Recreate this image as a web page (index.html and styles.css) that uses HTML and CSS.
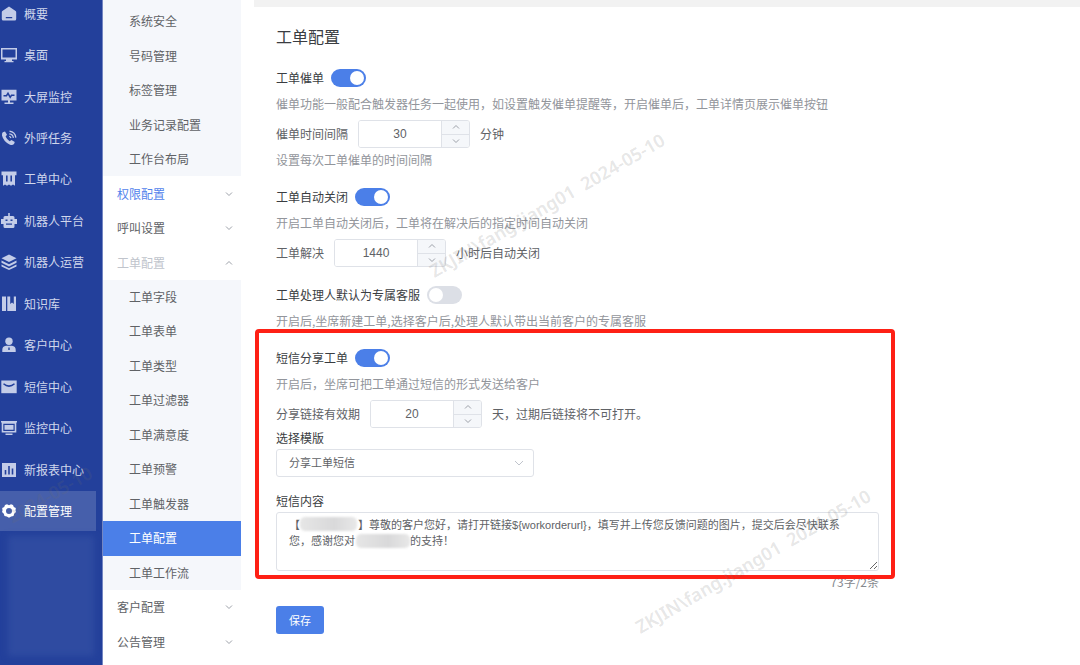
FILE: index.html
```html
<!DOCTYPE html>
<html lang="zh-CN">
<head>
<meta charset="utf-8">
<title>工单配置</title>
<link rel="stylesheet" href="styles.css">
</head>
<body>
<div class="app">
  <nav class="sidebar" aria-label="主导航">
    <a class="nav-item" href="#"><svg class="icon" viewBox="0 0 16 16"><path fill-rule="evenodd" d="M8 .5 14.600 5q.6.4.6 1.200V13q0 1.500-1.500 1.500H2.300Q.8 14.500.8 13V6.200Q.8 5.400 1.400 5ZM4.800 11v1.300h6.400V11Z"/></svg>概要</a>
    <a class="nav-item" href="#"><svg class="icon" viewBox="0 0 16 16"><path fill-rule="evenodd" d="M0 1h16v11.500h-5V14h1.500v1.300h-9V14H5v-1.500H0ZM1.500 2.500v8h13v-8Z"/></svg>桌面</a>
    <a class="nav-item" href="#"><svg class="icon" viewBox="0 0 16 16"><path d="M.5.800h15v10.700H9v2h3.500V15h-9v-1.500H7v-2H.500Z"/><path class="cut" d="M2.500 6.700h3L7 4.300l2.200 4 1.300-2h3"/></svg>大屏监控</a>
    <a class="nav-item" href="#"><svg class="icon" viewBox="0 0 16 16"><path d="M1.800 2.200 4 1.500l2 3.300-1.400 1.800q1.300 3 4 4.600l1.900-1.300 3.300 2.200-.8 2q-1.500 1.500-4 .6Q2.500 11.800 1 5.500.8 3.300 1.800 2.200Z"/><path class="line" d="M8.200 6.300q1.400.2 1.700 1.700M8.300 3.800q3.600.4 4.100 4M8.500 1.200q5.700.8 6.300 6.400"/></svg>外呼任务</a>
    <a class="nav-item" href="#"><svg class="icon" viewBox="0 0 16 16"><path fill-rule="evenodd" d="M.5.500h15v3.700H14v10.500l-2-1.300-2 1.300-2-1.300-2 1.300-2-1.300-2 1.300V4.200H.500ZM5 4.500v6h1.600v-6Zm4.400 0v6H11v-6Z"/></svg>工单中心</a>
    <a class="nav-item" href="#"><svg class="icon" viewBox="0 0 16 16"><path fill-rule="evenodd" d="M7.200 0h1.600v3H12q1.500 0 1.500 1.500V6H16v5h-2.500v2.500q0 1.500-1.500 1.500H4q-1.500 0-1.500-1.500V11H0V6h2.500V4.500Q2.500 3 4 3h3.200ZM4.500 6.500V8h2V6.500Zm5 0V8h2V6.500ZM5 10.500v1.300h6v-1.300Z"/></svg>机器人平台</a>
    <a class="nav-item" href="#"><svg class="icon" viewBox="0 0 16 16"><path d="m8 .5 7.500 3.700L8 8 .5 4.200Z"/><path d="m.5 6.500 7.500 3.700 7.500-3.700v2.300L8 12.500.5 8.800ZM.500 10.600 8 14.300l7.500-3.700v1.900L8 16 .5 12.500Z"/></svg>机器人运营</a>
    <a class="nav-item" href="#"><svg class="icon" viewBox="0 0 16 16"><path d="M1 .5h4v14.500H1ZM6.300.5h2.900V8l1.800-1.500L12.800 8V.500H15V15H6.300Z"/></svg>知识库</a>
    <a class="nav-item" href="#"><svg class="icon" viewBox="0 0 16 16"><circle cx="8" cy="4.200" r="3.700"/><path fill-rule="evenodd" d="M5 8.800h6q3.700.7 3.700 4V15H1.300v-2.200q0-3.300 3.700-4ZM7.300 10.500v2.500h1.400v-2.500Z"/></svg>客户中心</a>
    <a class="nav-item" href="#"><svg class="icon" viewBox="0 0 16 16"><path d="M.3 1.500h15.400v12.700H.3Z"/><path class="cut" d="M2.500 4.800Q8 9.500 13.500 4.800"/></svg>短信中心</a>
    <a class="nav-item" href="#"><svg class="icon" viewBox="0 0 16 16"><path fill-rule="evenodd" d="M0 1h16v1.500h-.7v10H.7v-10H0ZM2.300 3.800v7.200h11.400V3.800ZM3.500 5h9v4.800h-9ZM4.500 13.500h7V15h-7Z"/></svg>监控中心</a>
    <a class="nav-item" href="#"><svg class="icon" viewBox="0 0 16 16"><path fill-rule="evenodd" d="M1 1h14v14H1ZM3.700 8v4.500h1.600V8ZM7.200 4v8.500h1.600V4Zm3.500 2.500v6h1.600v-6Z"/></svg>新报表中心</a>
    <a class="nav-item nav-item-active" href="#" aria-current="page"><svg class="icon" viewBox="0 0 16 16"><path fill-rule="evenodd" d="m6 1.300 2 .9 2-.9 2 .8.8 2 2 .9-.3 2.500.5 1.500-1.800 1.800-.7 2.300-2.300.4L8 14.700l-2.200-1.200-2.300-.4-.7-2.300L1 9l.5-1.500L1.200 5l2-.9.800-2ZM8 5a3 3 0 1 0 0 6 3 3 0 0 0 0-6Z"/></svg>配置管理</a>
    <div class="nav-shade"></div>
  </nav>

  <nav class="submenu" aria-label="配置管理">
    <a class="sub-item" href="#">系统安全</a>
    <a class="sub-item" href="#">号码管理</a>
    <a class="sub-item" href="#">标签管理</a>
    <a class="sub-item" href="#">业务记录配置</a>
    <a class="sub-item" href="#">工作台布局</a>
    <button class="sub-group sub-group-current" type="button">权限配置<svg class="chevron" viewBox="0 0 8 8"><path d="m1 2.500 3 3 3-3"/></svg></button>
    <button class="sub-group" type="button">呼叫设置<svg class="chevron" viewBox="0 0 8 8"><path d="m1 2.500 3 3 3-3"/></svg></button>
    <button class="sub-group sub-group-open" type="button" aria-expanded="true">工单配置<svg class="chevron" viewBox="0 0 8 8"><path d="m1 5.500 3-3 3 3"/></svg></button>
    <a class="sub-item" href="#">工单字段</a>
    <a class="sub-item" href="#">工单表单</a>
    <a class="sub-item" href="#">工单类型</a>
    <a class="sub-item" href="#">工单过滤器</a>
    <a class="sub-item" href="#">工单满意度</a>
    <a class="sub-item" href="#">工单预警</a>
    <a class="sub-item" href="#">工单触发器</a>
    <a class="sub-item sub-item-active" href="#" aria-current="page">工单配置</a>
    <a class="sub-item" href="#">工单工作流</a>
    <button class="sub-group" type="button">客户配置<svg class="chevron" viewBox="0 0 8 8"><path d="m1 2.500 3 3 3-3"/></svg></button>
    <button class="sub-group" type="button">公告管理<svg class="chevron" viewBox="0 0 8 8"><path d="m1 2.500 3 3 3-3"/></svg></button>
  </nav>

  <main class="main">
    <div class="topbar"></div>
    <form class="form">
      <h1 class="title">工单配置</h1>

      <section class="section">
        <div class="switch-row"><label for="urge">工单催单</label><input class="switch" id="urge" type="checkbox" role="switch" checked></div>
        <p class="hint">催单功能一般配合触发器任务一起使用，如设置触发催单提醒等，开启催单后，工单详情页展示催单按钮</p>
        <div class="number-row">
          <label for="urge-gap">催单时间间隔</label>
          <div class="stepper"><input class="stepper-input" id="urge-gap" type="text" inputmode="numeric" value="30"><div class="stepper-buttons"><button class="step" type="button" aria-label="增加"><svg class="chevron" viewBox="0 0 8 8"><path d="m1 5.500 3-3 3 3"/></svg></button><button class="step" type="button" aria-label="减少"><svg class="chevron" viewBox="0 0 8 8"><path d="m1 2.500 3 3 3-3"/></svg></button></div></div>
          <span>分钟</span>
        </div>
        <p class="hint hint-close">设置每次工单催单的时间间隔</p>
      </section>

      <section class="section">
        <div class="switch-row"><label for="auto-close">工单自动关闭</label><input class="switch" id="auto-close" type="checkbox" role="switch" checked></div>
        <p class="hint">开启工单自动关闭后，工单将在解决后的指定时间自动关闭</p>
        <div class="number-row">
          <label for="close-hours">工单解决</label>
          <div class="stepper"><input class="stepper-input" id="close-hours" type="text" inputmode="numeric" value="1440"><div class="stepper-buttons"><button class="step" type="button" aria-label="增加"><svg class="chevron" viewBox="0 0 8 8"><path d="m1 5.500 3-3 3 3"/></svg></button><button class="step" type="button" aria-label="减少"><svg class="chevron" viewBox="0 0 8 8"><path d="m1 2.500 3 3 3-3"/></svg></button></div></div>
          <span>小时后自动关闭</span>
        </div>
      </section>

      <section class="section">
        <div class="switch-row"><label for="owner">工单处理人默认为专属客服</label><input class="switch" id="owner" type="checkbox" role="switch"></div>
        <p class="hint">开启后,坐席新建工单,选择客户后,处理人默认带出当前客户的专属客服</p>
      </section>

      <section class="section highlighted">
        <div class="switch-row"><label for="sms">短信分享工单</label><input class="switch" id="sms" type="checkbox" role="switch" checked></div>
        <p class="hint">开启后，坐席可把工单通过短信的形式发送给客户</p>
        <div class="number-row">
          <label for="sms-days">分享链接有效期</label>
          <div class="stepper"><input class="stepper-input" id="sms-days" type="text" inputmode="numeric" value="20"><div class="stepper-buttons"><button class="step" type="button" aria-label="增加"><svg class="chevron" viewBox="0 0 8 8"><path d="m1 5.500 3-3 3 3"/></svg></button><button class="step" type="button" aria-label="减少"><svg class="chevron" viewBox="0 0 8 8"><path d="m1 2.500 3 3 3-3"/></svg></button></div></div>
          <span>天，过期后链接将不可打开。</span>
        </div>
        <label class="field-label" for="template">选择模版</label>
        <div class="select-box">
          <select class="select" id="template"><option>分享工单短信</option></select>
          <svg class="select-arrow" viewBox="0 0 12 12"><path d="m2 4 4 4 4-4"/></svg>
        </div>
        <label class="field-label field-label-spaced" for="content">短信内容</label>
        <div class="textarea-box">
          <textarea class="textarea" id="content">【　　　　　 】尊敬的客户您好，请打开链接${workorderurl}，填写并上传您反馈问题的图片，提交后会尽快联系您，感谢您对　　　　　的支持！</textarea>
          <span class="smudge smudge-name"></span>
          <span class="smudge smudge-brand"></span>
        </div>
      </section>
      <p class="counter">73字/2条</p>
      <button class="save" type="button">保存</button>
    </form>
  </main>

  <div class="watermarks" aria-hidden="true">
    <span class="watermark mark-left">2024-05-10</span>
    <span class="watermark mark-top">ZKJIN\fang.jiang01&nbsp; 2024-05-10</span>
    <span class="watermark mark-bottom">ZKJIN\fang.jiang01&nbsp; 2024-05-10</span>
  </div>
</div>
</body>
</html>
```

FILE: styles.css
```css
* { box-sizing: border-box; }

body {
  margin: 0;
  font-family: "Noto Sans CJK SC", "Liberation Sans", sans-serif;
  font-size: 12px;
  line-height: 18px;
  color: #606266;
  background: #fff;
}

button, input, select, textarea { font: inherit; color: inherit; }
a { color: inherit; text-decoration: none; }
p, h1 { margin: 0; }

.app {
  position: relative;
  display: flex;
  min-height: 100vh;
  overflow: hidden;
}

/* Primary navigation */
.sidebar {
  flex: none;
  width: 103px;
  display: grid;
  grid-template-rows: repeat(16, 1fr);
  margin-top: -7px;
  padding-bottom: 9px;
  background: #23409b;
  border-right: 1px solid #7486c2;
  color: #d0d7ec;
}
.nav-item {
  display: flex;
  align-items: center;
  gap: 7px;
  margin: 1px 6px 1px 0;
  padding-left: 1px;
  white-space: nowrap;
}
.nav-item-active { background: #465fab; color: #fff; }
.icon { flex: none; width: 16px; height: 16px; fill: #c3cce8; }
.nav-item-active .icon { fill: #fff; }
.icon .cut { fill: none; stroke: #23409b; stroke-width: 1.5; }
.icon .line { fill: none; stroke: #c3cce8; stroke-width: 1.3; }
.nav-shade {
  grid-row: span 3;
  margin: 4px 8px 0;
  background: #2f4ba1;
  filter: blur(3px);
}

/* Secondary navigation */
.submenu {
  flex: none;
  width: 138px;
  display: grid;
  grid-template-rows: repeat(19, 1fr);
  padding: 4px 0 6px;
  background: linear-gradient(#f5f7fb 20px, #fff 20px);
}
.sub-item, .sub-group {
  display: flex;
  align-items: center;
  border: 0;
  white-space: nowrap;
}
.sub-item { padding-left: 26px; background: #f5f7fb; }
.sub-item-active { background: #4b7fe8; color: #fff; }
.sub-group {
  justify-content: space-between;
  padding: 0 8px 0 14px;
  background: #fff;
}
.sub-group-current { color: #5383ec; }
.sub-group-open { color: #c0c4cc; }
.chevron {
  width: 8px;
  height: 8px;
  fill: none;
  stroke: #9da1a9;
  stroke-width: 1;
}

/* Content */
.main { flex: 1; min-width: 0; padding-left: 13px; }
.topbar { height: 7px; background: #f2f2f2; }
.form {
  max-width: 641px;
  padding: 17px 16px 24px 22px;
}
.title {
  margin-bottom: 20px;
  font-size: 16px;
  font-weight: 400;
  line-height: 24px;
  color: #3a3d42;
}
.section { margin-bottom: 18px; }
.switch-row {
  display: flex;
  align-items: center;
  gap: 7px;
  height: 20px;
  color: #3a3d42;
}
.hint { margin-top: 7px; color: #92959b; }
.hint-close { margin-top: 3px; }
.number-row {
  display: flex;
  align-items: center;
  gap: 10px;
  margin-top: 7px;
}

.switch {
  appearance: none;
  display: flex;
  width: 35px;
  height: 18px;
  margin: 0;
  padding: 2px;
  border-radius: 9px;
  background: #dcdfe6;
}
.switch::before {
  content: "";
  width: 14px;
  height: 14px;
  border-radius: 50%;
  background: #fff;
}
.switch:checked { justify-content: flex-end; background: #4b7fe8; }

.stepper {
  display: flex;
  width: 112px;
  height: 28px;
  border: 1px solid #dfe2e8;
  border-radius: 3px;
  overflow: hidden;
}
.stepper-input {
  flex: 1;
  min-width: 0;
  padding: 0;
  border: 0;
  font-family: "Liberation Sans", sans-serif;
  text-align: center;
  background: #fff;
}
.stepper-buttons {
  display: flex;
  flex-direction: column;
  width: 28px;
  border-left: 1px solid #dfe2e8;
}
.step {
  flex: 1;
  display: flex;
  align-items: center;
  justify-content: center;
  padding: 0;
  border: 0;
  background: #f5f7fa;
}
.step + .step { border-top: 1px solid #dfe2e8; }

.field-label { display: block; margin: 1px 0 2px; color: #3a3d42; }
.field-label-spaced { margin-top: 15px; }
.select-box { position: relative; width: 258px; max-width: 100%; }
.select {
  appearance: none;
  display: block;
  width: 100%;
  height: 28px;
  padding: 0 30px 0 12px;
  border: 1px solid #dfe2e8;
  border-radius: 3px;
  background: #fff;
  font-family: "Liberation Sans", "Noto Sans CJK SC", sans-serif;
  font-size: 11px;
}
.select-arrow {
  position: absolute;
  top: 8px;
  right: 9px;
  width: 12px;
  height: 12px;
  fill: none;
  stroke: #c0c4cc;
}
.textarea-box { position: relative; }
.textarea {
  display: block;
  width: 100%;
  height: 59px;
  padding: 4px 18px 4px 12px;
  border: 1px solid #dfe2e8;
  border-radius: 3px;
  resize: vertical;
  overflow: hidden;
  background: #fff;
  font-family: "Liberation Sans", "Noto Sans CJK SC", sans-serif;
  font-size: 11px;
  line-height: 16px;
}
.smudge {
  position: absolute;
  height: 14px;
  border-radius: 5px;
  background: linear-gradient(90deg, #e6e6e6, #d9d9da 60%, #e8e8e8);
  filter: blur(1px);
  pointer-events: none;
}
.smudge-name { top: 5px; left: 24px; width: 57px; }
.smudge-brand { top: 22px; left: 80px; width: 54px; }

/* Red callout frame around the SMS settings */
.highlighted { position: relative; z-index: 1; margin-bottom: 2px; }
.highlighted::after {
  content: "";
  position: absolute;
  inset: -19px -16px -8px -21px;
  border: 4px solid #fe2015;
  border-radius: 4px;
  pointer-events: none;
}
.counter { margin-bottom: 15px; text-align: right; color: #85888e; }
.save {
  height: 28px;
  padding: 0 13px;
  border: 0;
  border-radius: 3px;
  background: #4b7fe8;
  color: #fff;
  font-size: 11px;
}

/* Tiled user watermark */
.watermarks { position: absolute; inset: 0; z-index: 2; overflow: hidden; pointer-events: none; }
.watermark {
  position: absolute;
  font-family: "Noto Sans", sans-serif;
  font-size: 18px;
  line-height: 24px;
  font-weight: 600;
  color: rgba(110, 110, 110, 0.18);
  white-space: nowrap;
  transform: rotate(-30deg);
  transform-origin: left center;
}
.mark-left { left: 9px; top: 506px; }
.mark-top { left: 431px; top: 260px; }
.mark-bottom { left: 637px; top: 616px; }
```
